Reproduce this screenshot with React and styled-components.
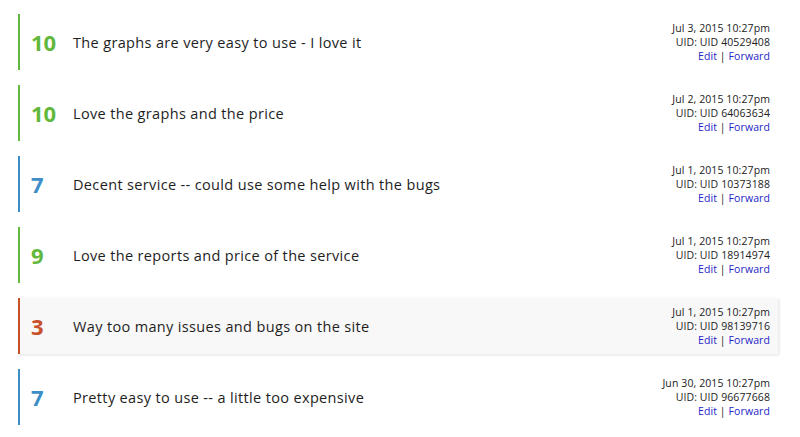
import React from 'react';
import styled, { createGlobalStyle } from 'styled-components';

const GlobalStyle = createGlobalStyle`
  body {
    margin: 0;
    background: #fff;
    font-family: "Open Sans", "Liberation Sans", sans-serif;
  }
`;

const List = styled.div`
  display: flex;
  flex-direction: column;
  gap: 15px;
  padding: 14px 22px 0 18px;
`;

const Row = styled.div`
  display: flex;
  align-items: center;
  height: 56px;
  border-left: 2px solid ${(p) => p.color};
  background: ${(p) => (p.active ? '#f8f8f8' : 'transparent')};
  box-shadow: ${(p) => (p.active ? '1px 1px 3px rgba(0,0,0,0.12)' : 'none')};
`;

const Score = styled.div`
  width: 42px;
  margin-left: 11px;
  font-size: 22px;
  font-weight: 700;
  color: ${(p) => p.color};
`;

const Comment = styled.div`
  flex: 1;
  font-size: 14.5px;
  color: #1e1e1e;
  letter-spacing: 0.35px;
`;

const Meta = styled.div`
  padding-right: 8px;
  text-align: right;
  font-size: 10.5px;
  line-height: 14px;
  color: #222;
  letter-spacing: 0.1px;
`;

const Link = styled.a`
  color: #2424c8;
  text-decoration: none;
`;

const colors = { green: '#62b83c', blue: '#3d8ec6', red: '#c8512a' };

const items = [
  { score: 10, c: 'green', text: 'The graphs are very easy to use - I love it', date: 'Jul 3, 2015 10:27pm', uid: '40529408' },
  { score: 10, c: 'green', text: 'Love the graphs and the price', date: 'Jul 2, 2015 10:27pm', uid: '64063634' },
  { score: 7, c: 'blue', text: 'Decent service -- could use some help with the bugs', date: 'Jul 1, 2015 10:27pm', uid: '10373188' },
  { score: 9, c: 'green', text: 'Love the reports and price of the service', date: 'Jul 1, 2015 10:27pm', uid: '18914974' },
  { score: 3, c: 'red', text: 'Way too many issues and bugs on the site', date: 'Jul 1, 2015 10:27pm', uid: '98139716', active: true },
  { score: 7, c: 'blue', text: 'Pretty easy to use -- a little too expensive', date: 'Jun 30, 2015 10:27pm', uid: '96677668' },
];

export default function App() {
  return (
    <>
      <GlobalStyle />
      <List>
        {items.map((it, i) => (
          <Row key={i} color={colors[it.c]} active={it.active}>
            <Score color={colors[it.c]}>{it.score}</Score>
            <Comment>{it.text}</Comment>
            <Meta>
              <div>{it.date}</div>
              <div>UID: UID {it.uid}</div>
              <div>
                <Link href="#">Edit</Link> | <Link href="#">Forward</Link>
              </div>
            </Meta>
          </Row>
        ))}
      </List>
    </>
  );
}
